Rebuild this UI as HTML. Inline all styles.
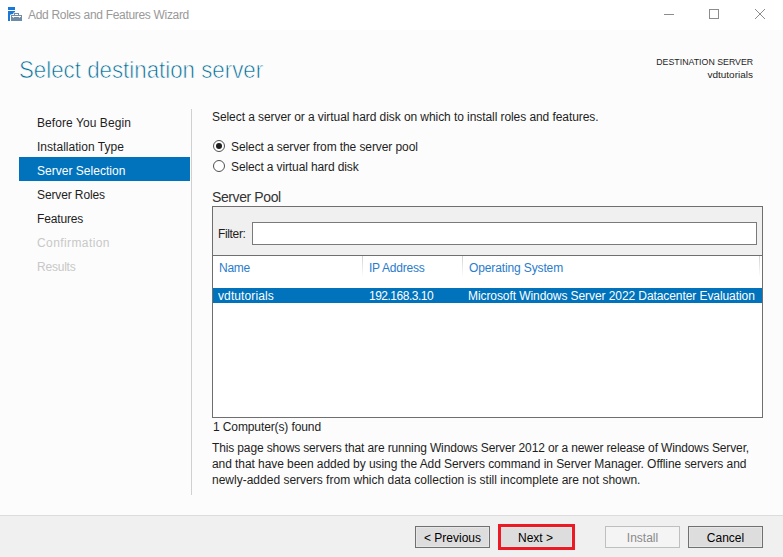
<!DOCTYPE html>
<html><head><meta charset="utf-8">
<style>
html,body{margin:0;padding:0;}
body{width:783px;height:557px;position:relative;overflow:hidden;background:#fcfcfc;font-family:"Liberation Sans",sans-serif;font-size:12px;color:#1e1e1e;}
.a{position:absolute;}
.t{position:absolute;white-space:nowrap;line-height:16px;}
#titlebar{left:0;top:0;width:783px;height:30px;background:#fff;}
#footer{left:0;top:515px;width:783px;height:42px;background:#f0f0f0;border-top:1px solid #dcdcdc;}
.btn{position:absolute;top:526px;height:20px;width:73px;border:1px solid #707070;background:#dddddd;box-shadow:inset 0 0 0 1px #e6e6e6;text-align:center;line-height:22px;color:#000;}
</style></head><body>
<div id="titlebar" class="a"></div>
<svg class="a" style="left:0;top:0" width="30" height="30" viewBox="0 0 30 30">
  <rect x="8" y="7" width="7" height="3" fill="#1a78d6"/>
  <path d="M8 11 H15 V12 Q13.5 14.6 10 15 V21 H8 Z" fill="#1a78d6"/>
  <path d="M10.5 14.5 H23 V22 H10.5 Z M13.5 12.5 H20 V14.5 H13.5 Z" fill="#fff" opacity="0.9"/>
  <rect x="11" y="15" width="11" height="6" fill="#6f8ca6"/>
  <path d="M14 15 V13 H19 V15 H18 V14 H15 V15 Z" fill="#6f8ca6"/>
  <path d="M12 16 H21 V17 H20.2 L19.5 18 L18.8 17 H14.2 L13.5 18 L12.8 17 H12 Z" fill="#fff"/>
</svg>
<div class="t" style="left:28px;top:7px;color:#999;letter-spacing:-0.314px">Add Roles and Features Wizard</div>
<!-- window controls -->
<div class="a" style="left:664px;top:14px;width:10px;height:1px;background:#8c8c8c"></div>
<div class="a" style="left:709px;top:9px;width:8px;height:8px;border:1px solid #8c8c8c"></div>
<svg class="a" style="left:754px;top:8px" width="12" height="12" viewBox="0 0 12 12"><path d="M1 1 L11 11 M11 1 L1 11" stroke="#8c8c8c" stroke-width="1"/></svg>

<div class="t" style="left:19px;top:55px;font-size:24px;line-height:30px;color:#006c96;transform:scaleX(0.929);transform-origin:left center;-webkit-text-stroke:0.7px #fcfcfc">Select destination server</div>
<div class="t" style="right:30px;top:54.5px;font-size:10px;line-height:14px;transform:scale(0.88,0.92);transform-origin:right bottom">DESTINATION SERVER</div>
<div class="t" style="right:30px;top:68px;font-size:10px;line-height:14px;transform:scale(1,0.9);transform-origin:right bottom">vdtutorials</div>

<!-- nav -->
<div class="a" style="left:19px;top:157px;width:171px;height:24px;background:#0073bc"></div>
<div class="t" style="left:37px;top:115px;letter-spacing:0.073px">Before You Begin</div>
<div class="t" style="left:37px;top:139px;letter-spacing:0.025px">Installation Type</div>
<div class="t" style="left:37px;top:163px;color:#fff;letter-spacing:0.020px">Server Selection</div>
<div class="t" style="left:37px;top:187px;letter-spacing:-0.118px">Server Roles</div>
<div class="t" style="left:37px;top:211px;letter-spacing:-0.143px">Features</div>
<div class="t" style="left:37px;top:235px;color:#c8c8c8;letter-spacing:0.409px">Confirmation</div>
<div class="t" style="left:37px;top:259px;color:#c8c8c8;letter-spacing:-0.217px">Results</div>
<div class="a" style="left:191px;top:109px;width:1px;height:386px;background:#d0d0d0"></div>

<!-- content -->
<div class="t" style="left:212px;top:109px;letter-spacing:-0.073px">Select a server or a virtual hard disk on which to install roles and features.</div>
<svg class="a" style="left:212px;top:139px" width="14" height="14" viewBox="0 0 14 14"><circle cx="7" cy="7" r="5.5" fill="#fff" stroke="#505050" stroke-width="1"/><circle cx="7" cy="7" r="3" fill="#1e1e1e"/></svg>
<div class="t" style="left:231px;top:139px;letter-spacing:-0.091px">Select a server from the server pool</div>
<svg class="a" style="left:212px;top:159px" width="14" height="14" viewBox="0 0 14 14"><circle cx="7" cy="7" r="5.5" fill="#fff" stroke="#505050" stroke-width="1"/></svg>
<div class="t" style="left:231px;top:159px;letter-spacing:-0.124px">Select a virtual hard disk</div>
<div class="t" style="left:212px;top:188px;font-size:14px;line-height:18px;color:#333;letter-spacing:-0.400px">Server Pool</div>

<!-- box -->
<div class="a" style="left:212px;top:206px;width:549px;height:210px;border:1px solid #6f6f6f;background:#fff"></div>
<div class="a" style="left:213px;top:207px;width:549px;height:48px;background:#f0f0f0;border-bottom:1px solid #6f6f6f"></div>
<div class="t" style="left:218px;top:226px;letter-spacing:-0.350px">Filter:</div>
<div class="a" style="left:252px;top:222px;width:503px;height:21px;border:1px solid #7a7a7a;background:#fff"></div>
<div class="t" style="left:219px;top:260px;color:#2a7ccc;letter-spacing:-0.267px">Name</div>
<div class="t" style="left:369px;top:260px;color:#2a7ccc;letter-spacing:-0.233px">IP Address</div>
<div class="t" style="left:469px;top:260px;color:#2a7ccc;letter-spacing:-0.127px">Operating System</div>
<div class="a" style="left:362px;top:256px;width:1px;height:21px;background:linear-gradient(#d2d2d2,#e8e8e8 50%,#fff)"></div><div class="a" style="left:462px;top:256px;width:1px;height:21px;background:linear-gradient(#d2d2d2,#e8e8e8 50%,#fff)"></div><div class="a" style="left:759px;top:256px;width:1px;height:21px;background:linear-gradient(#d2d2d2,#e8e8e8 50%,#fff)"></div>

<div class="a" style="left:213px;top:288px;width:549px;height:15px;background:#0073bc"></div>
<div class="t" style="left:218px;top:289px;color:#fff;line-height:15px;letter-spacing:0.110px">vdtutorials</div>
<div class="t" style="left:369px;top:289px;color:#fff;line-height:15px;letter-spacing:-0.500px">192.168.3.10</div>
<div class="t" style="left:468px;top:289px;color:#fff;line-height:15px;letter-spacing:-0.080px">Microsoft Windows Server 2022 Datacenter Evaluation</div>

<div class="t" style="left:213px;top:419px;letter-spacing:-0.111px">1 Computer(s) found</div>
<div class="t" style="left:212px;top:440px;letter-spacing:-0.135px">This page shows servers that are running Windows Server 2012 or a newer release of Windows Server,</div>
<div class="t" style="left:212px;top:456px;letter-spacing:-0.067px">and that have been added by using the Add Servers command in Server Manager. Offline servers and</div>
<div class="t" style="left:212px;top:472px;letter-spacing:0.003px">newly-added servers from which data collection is still incomplete are not shown.</div>

<!-- footer -->
<div id="footer" class="a"></div>
<div class="btn" style="left:415px;">&lt; Previous</div>
<div class="btn" style="left:498px;">Next &gt;</div>
<div class="a" style="left:498px;top:524px;width:71px;height:20px;border:3px solid #ec1a24"></div>
<div class="btn" style="left:605px;background:#f4f4f4;border-color:#bfbfbf;box-shadow:none;color:#8a8a8a">Install</div>
<div class="btn" style="left:688px;">Cancel</div>
</body></html>
